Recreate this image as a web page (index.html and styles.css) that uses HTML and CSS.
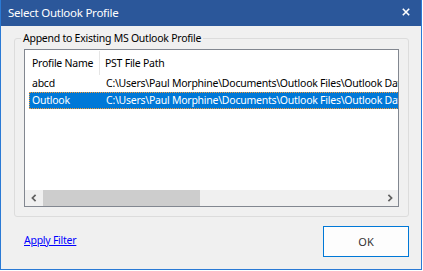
FILE: index.html
```html
<!DOCTYPE html>
<html>
<head>
    <meta charset="utf-8" />
    <title>Select Outlook Profile</title>
    <link rel="stylesheet" href="styles.css">
</head>
<body>
    <div class="window">
        <div class="titlebar">
            <span class="title">Select Outlook Profile</span>
            <svg class="close" width="8" height="8" viewBox="0 0 8 8">
                <path d="M0.8 0.8 L7.2 7.2 M7.2 0.8 L0.8 7.2" stroke="#fff" stroke-width="1.6" />
            </svg>
        </div>
        <div class="content">
            <fieldset class="group">
                <legend>Append to Existing MS Outlook Profile</legend>
                <div class="listview">
                    <div class="lv-header">
                        <div class="hd-name">Profile Name</div>
                        <div class="hd-path">PST File Path</div>
                    </div>
                    <div class="lv-rows">
                        <div class="lv-row">
                            <div class="col-name">abcd</div>
                            <div class="col-path">C:\Users\Paul Morphine\Documents\Outlook Files\Outlook Data File - abcd.pst</div>
                        </div>
                        <div class="lv-row selected">
                            <div class="col-name">Outlook</div>
                            <div class="col-path">C:\Users\Paul Morphine\Documents\Outlook Files\Outlook Data File.pst</div>
                        </div>
                    </div>
                    <div class="hscroll">
                        <div class="arrow">
                            <svg width="6" height="8" viewBox="0 0 6 8"><polyline points="4.6,0.8 1.4,4 4.6,7.2" fill="none" stroke="#606060" stroke-width="1.7" /></svg>
                        </div>
                        <div class="thumb"></div>
                        <div class="track"></div>
                        <div class="arrow">
                            <svg width="6" height="8" viewBox="0 0 6 8"><polyline points="1.4,0.8 4.6,4 1.4,7.2" fill="none" stroke="#606060" stroke-width="1.7" /></svg>
                        </div>
                    </div>
                </div>
            </fieldset>
            <div class="footer">
                <a class="link" href="#">Apply Filter</a>
                <button class="ok">OK</button>
            </div>
        </div>
    </div>
</body>
</html>
```
FILE: styles.css
```css
body {
    margin: 0;
    background-color: #fff;
    font-family: 'Noto Sans', sans-serif;
    font-size: 10.5px;
    letter-spacing: -0.25px;
    color: #000;
}

.window {
    box-sizing: border-box;
    width: 422px;
    height: 270px;
    border: 1px solid #2a7ad5;
    border-top: 0;
    display: flex;
    flex-direction: column;
}

.titlebar {
    height: 26px;
    flex: none;
    background-color: #2b579a;
    display: flex;
    justify-content: space-between;
    align-items: flex-start;
    padding: 0 11px 0 7px;
}

.title {
    color: #fff;
    font-size: 11.5px;
    line-height: 26px;
}

.close {
    margin-top: 8px;
}

.content {
    flex: 1;
    background-color: #f0f0f0;
    padding: 5px 12px 12px 13px;
}

.group {
    margin: 0;
    min-width: 0;
    padding: 4px 9px 9px 9px;
    border: 1px solid #dcdcdc;
    border-radius: 3px;
}

.group legend {
    height: 14px;
    line-height: 14px;
    padding: 0 2px;
    margin-left: -3px;
    color: #000;
}

.listview {
    box-sizing: border-box;
    height: 158px;
    border: 1px solid #828790;
    background-color: #fff;
    display: flex;
    flex-direction: column;
    overflow: hidden;
}

.lv-header {
    height: 25px;
    flex: none;
    display: flex;
    align-items: stretch;
    white-space: nowrap;
}

.hd-name {
    width: 75px;
    padding: 5px 0 0 7px;
    box-sizing: border-box;
    border-right: 1px solid #e5e5e5;
    line-height: 14px;
    margin-top: 1px;
}

.hd-path {
    padding: 6px 0 0 5px;
    line-height: 14px;
}

.lv-rows {
    flex: 1;
}

.lv-row {
    height: 17px;
    box-sizing: border-box;
    width: 400px;
    margin-left: 4px;
    border: 1px dotted transparent;
    display: flex;
    white-space: nowrap;
    line-height: 15px;
}

.lv-row.selected {
    background-color: #0078d7;
    border-color: #f99a33;
    color: #fff;
}

.col-name {
    width: 76px;
    flex: none;
    padding-left: 2px;
    box-sizing: border-box;
}

.col-path {
    flex: none;
}

.hscroll {
    height: 16px;
    flex: none;
    display: flex;
    background-color: #f0f0f0;
}

.arrow {
    width: 17px;
    display: flex;
    align-items: center;
    justify-content: center;
}

.hscroll .arrow:first-child {
    width: 18px;
}

.thumb {
    width: 157px;
    background-color: #cdcdcd;
}

.track {
    flex: 1;
}

.footer {
    margin-top: 9px;
    padding-left: 10px;
    display: flex;
    justify-content: space-between;
    align-items: center;
}

.link {
    color: #0000ff;
    margin-bottom: 3px;
}

.ok {
    width: 86px;
    height: 31px;
    border: 1px solid #0078d7;
    background-color: #fdfdfd;
    font-family: 'Noto Sans', sans-serif;
    font-size: 11px;
    color: #333;
    padding: 0;
}
```
